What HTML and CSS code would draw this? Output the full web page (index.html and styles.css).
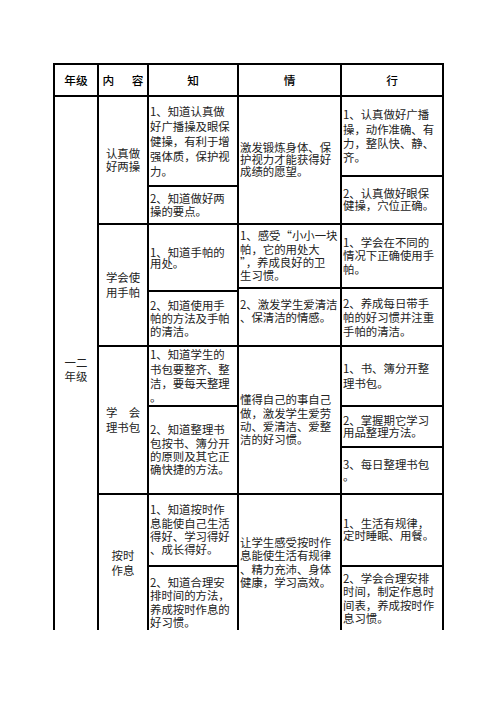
FILE: index.html
```html
<!DOCTYPE html>
<html lang="zh-CN">
<head>
<meta charset="utf-8">
<title>年级 内容 知 情 行</title>
<link rel="stylesheet" href="styles.css">
</head>
<body>
<div class="tbl">
  <div class="c hd col1 row-hd">年级</div>
  <div class="c hd col2 row-hd"><span><span class="sp">内</span>容</span></div>
  <div class="c hd col3 row-hd">知</div>
  <div class="c hd col4 row-hd">情</div>
  <div class="c hd col5 row-hd">行</div>

  <div class="c mid col1 grade">一二<br>年级</div>

  <div class="c mid col2 g1">认真做<br>好两操</div>
  <div class="c t col3 k1a lh15">1、知道认真做<br>好广播操及眼保<br>健操，有利于增<br>强体质，保护视<br>力。</div>
  <div class="c t col3 k1b lh13">2、知道做好两<br>操的要点。</div>
  <div class="c t col4 g1 lh12">激发锻炼身体、保<br>护视力才能获得好<br>成绩的愿望。</div>
  <div class="c t col5 x1a lh145">1、认真做好广播<br>操，动作准确、有<br>力，整队快、静、<br>齐。</div>
  <div class="c t col5 x1b lh12">2、认真做好眼保<br>健操，穴位正确。</div>

  <div class="c mid col2 g2 lh15">学会使<br>用手帕</div>
  <div class="c t col3 k2a lh11">1、知道手帕的<br>用处。</div>
  <div class="c t col3 k2b lh13">2、知道使用手<br>帕的方法及手帕<br>的清洁。</div>
  <div class="c t col4 q2a lh13">1、感受“小小一块<br>帕，它的用处大<br>”，养成良好的卫<br>生习惯。</div>
  <div class="c t col4 q2b lh13 up">2、激发学生爱清洁<br>、保清洁的情感。</div>
  <div class="c t col5 q2a lh13">1、学会在不同的<br>情况下正确使用手<br>帕。</div>
  <div class="c t col5 q2b lh14">2、养成每日带手<br>帕的好习惯并注重<br>手帕的清洁。</div>

  <div class="c mid col2 g3 lh15"><span><span class="sp2">学</span>会</span>理书包</div>
  <div class="c t col3 k3a lh145">1、知道学生的<br>书包要整齐、整<br>洁，要每天整理<br>。</div>
  <div class="c t col3 k3b lh13">2、知道整理书<br>包按书、簿分开<br>的原则及其它正<br>确快捷的方法。</div>
  <div class="c t col4 g3 lh13">懂得自己的事自己<br>做，激发学生爱劳<br>动、爱清洁、爱整<br>洁的好习惯。</div>
  <div class="c t col5 x3a lh15">1、书、簿分开整<br>理书包。</div>
  <div class="c t col5 x3b lh12">2、掌握期它学习<br>用品整理方法。</div>
  <div class="c t col5 x3c lh12">3、每日整理书包<br>。</div>

  <div class="c mid col2 g4 lh15">按时<br>作息</div>
  <div class="c t col3 k4a lh13">1、知道按时作<br>息能使自己生活<br>得好、学习得好<br>、成长得好。</div>
  <div class="c t col3 k4b lh13 dn">2、知道合理安<br>排时间的方法，<br>养成按时作息的<br>好习惯。</div>
  <div class="c t col4 g4 lh13">让学生感受按时作<br>息能使生活有规律<br>、精力充沛、身体<br>健康，学习高效。</div>
  <div class="c t col5 k4a lh12">1、生活有规律，<br>定时睡眠、用餐。</div>
  <div class="c t col5 k4b lh13">2、学会合理安排<br>时间，制定作息时<br>间表，养成按时作<br>息习惯。</div>
</div>
</body>
</html>
```
FILE: styles.css
```css
html, body {
  margin: 0;
  background: #fff;
}
body {
  font-family: "Noto Sans CJK SC", "Noto Sans", sans-serif;
  color: #222;
}
.tbl {
  display: grid;
  grid-template-columns: 42px 48px 88px 101px 100px;
  grid-template-rows: 30px 78px 8px 36px 62px 1px 53px 58px 39px 45px 70px 63px;
  gap: 2px;
  padding: 2px 2px 0 2px;
  background: #000;
  width: max-content;
  margin: 63px 0 0 53px;
}
.c {
  background: #fff;
  display: flex;
  flex-direction: column;
  justify-content: center;
  font-size: 11.4px;
  white-space: nowrap;
  overflow: hidden;
}
.t { padding-left: 1px; }
.hd {
  align-items: center;
  font-size: 11.7px;
  font-weight: 500;
  line-height: 14px;
  color: #000;
}
.mid {
  align-items: center;
  text-align: center;
  line-height: 13.3px;
}
.grade { padding-top: 12px; }
.sp { margin-right: 1.5em; }
.sp2 { margin-right: 1em; }
.col1 { grid-column: 1; }
.col2 { grid-column: 2; }
.col3 { grid-column: 3; }
.col4 { grid-column: 4; }
.col5 { grid-column: 5; }
.row-hd { grid-row: 1; }
.grade { grid-row: 2 / 13; }
.g1 { grid-row: 2 / 5; }
.g2 { grid-row: 5 / 8; }
.g3 { grid-row: 8 / 11; }
.g4 { grid-row: 11 / 13; }
.k1a { grid-row: 2 / 4; }
.k1b { grid-row: 4 / 5; }
.x1a { grid-row: 2 / 3; }
.x1b { grid-row: 3 / 5; }
.k2a { grid-row: 5 / 7; }
.k2b { grid-row: 7 / 8; }
.q2a { grid-row: 5 / 6; }
.q2b { grid-row: 6 / 8; }
.k3a, .x3a { grid-row: 8 / 9; }
.k3b { grid-row: 9 / 11; }
.x3b { grid-row: 9 / 10; }
.x3c { grid-row: 10 / 11; }
.k4a { grid-row: 11 / 12; }
.k4b { grid-row: 12 / 13; }
.dn { padding-top: 8px; }
.lh11 { line-height: 11px; }
.lh12 { line-height: 11.7px; }
.lh13 { line-height: 13.3px; }
.lh14 { line-height: 14px; }
.lh145 { line-height: 14.4px; }
.lh15 { line-height: 15px; }
.up { padding-bottom: 12px; }
```
